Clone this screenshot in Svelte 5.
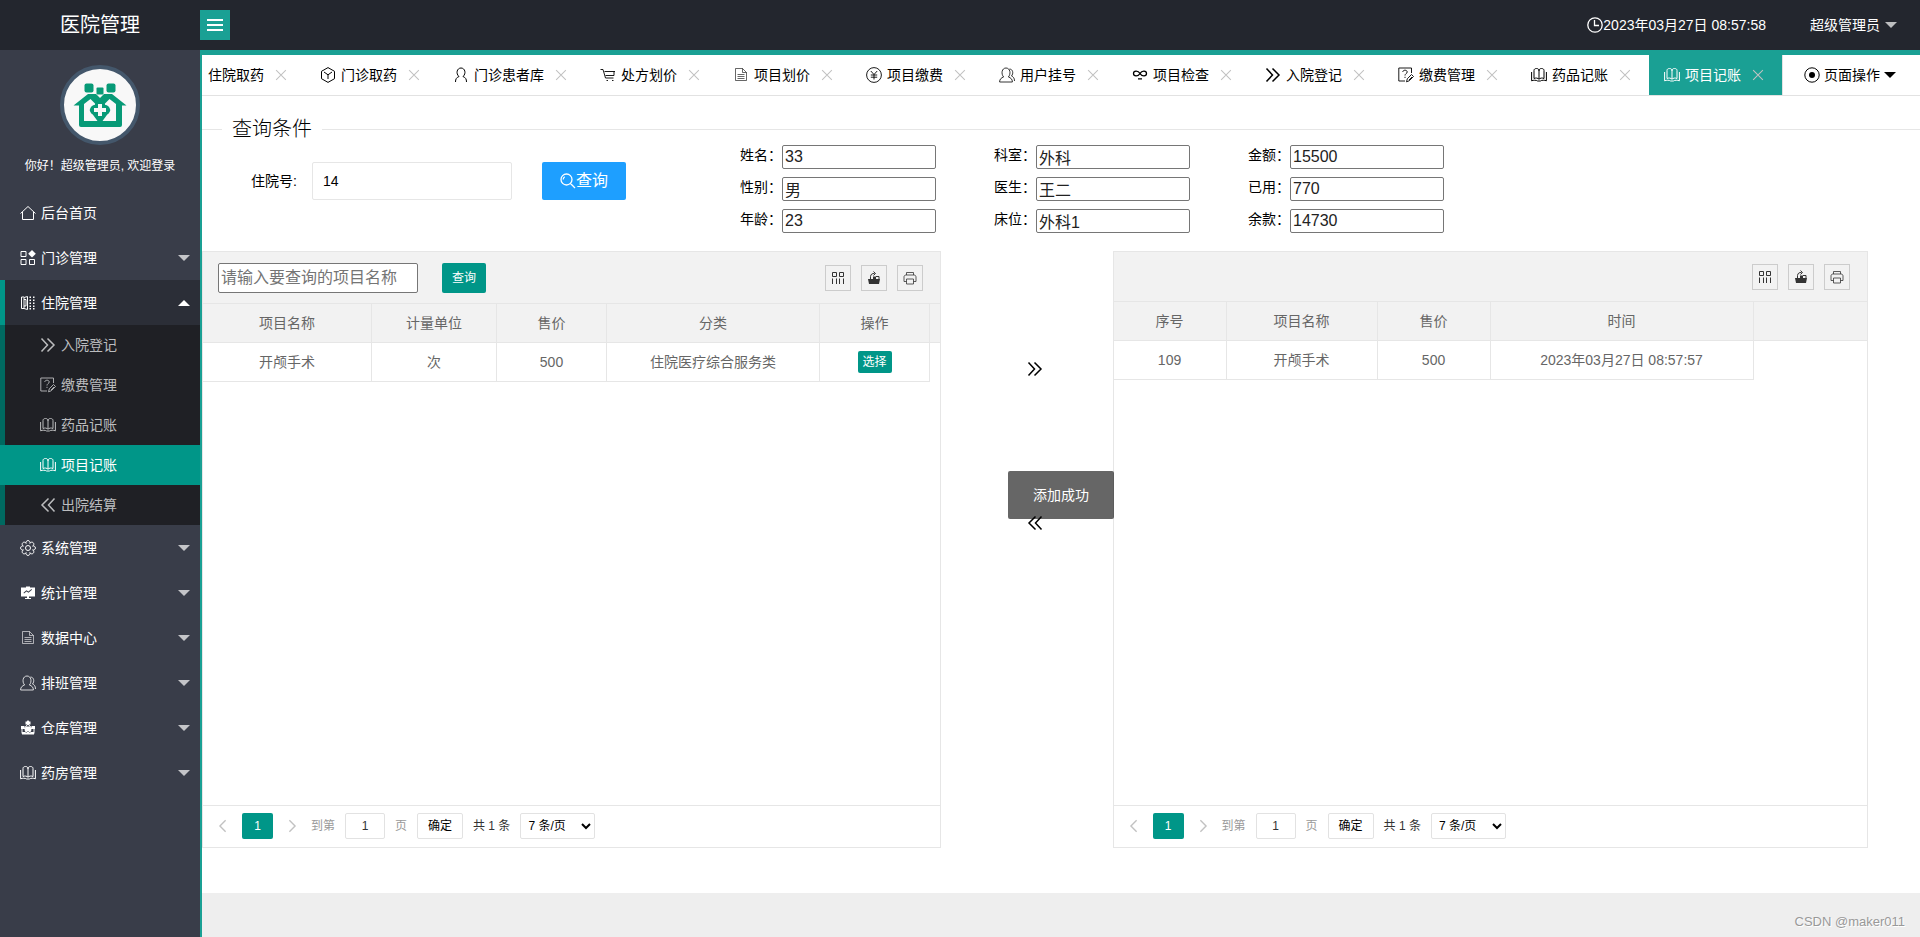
<script lang="ts">
	type Glyph = { line?: string; solid?: string; weight?: number };

	const glyphs: Record<string, Glyph> = {
		menu: { solid: 'M0 2h16v2H0zM0 7h16v2H0zM0 12h16v2H0z' },
		home: { line: 'M.5 8.5L8 1.5l7.5 7M2.5 7v7.5h11V7' },
		blocks: {
			line: 'M1 1.5h5v5H1zM1 9.5h5v5H1zM9.5 9.5h5v5h-5z',
			solid: 'M12 0l3.8 3.8L12 7.6 8.2 3.8z'
		},
		ward: {
			line: 'M4 2H1.5v11.5H4M4 4.5h2v6.5H4M7.5 1.5v13L4 13.5V2.5z',
			solid:
				'M9.5 1.5H11V3H9.5zM9.5 4.5H11V6H9.5zM9.5 7.5H11V9H9.5zM9.5 10.5H11V12H9.5zM9.5 13H11v1.5H9.5zM13 1.5h1.5V3H13zM13 4.5h1.5V6H13zM13 7.5h1.5V9H13zM13 10.5h1.5V12H13zM13 13h1.5v1.5H13z'
		},
		next: { line: 'M1.5 1.5L7.5 8l-6 6.5M7.5 1.5L14 8l-6.5 6.5', weight: 1.5 },
		prev: { line: 'M14.5 1.5L8.5 8l6 6.5M8.500 1.5L2 8l6.5 6.5', weight: 1.5 },
		survey: {
			line: 'M13.5 6V1H.8v13H7M4.8 5c0-2.400 4.400-2.400 4.400 0 0 1.600-2.200 1.600-2.200 3.500M7 9.800V11M8.500 14.800l.8-3 4.200-4.300 2 2-4.300 4.300zM11 13l3-3',
			weight: 0.9
		},
		book: {
			line: 'M8 4C8 2.200 7 1.500 5.500 1.500S3 2.200 3 3.500V11.500c1.500-.8 4-.6 5 .8 1-1.400 3.500-1.600 5-.8V3.500c0-1.300-1-2-2.500-2S8 2.200 8 4zv8M.6 5v8.800c2-.8 4.500-.8 6 .2h2.800c1.500-1 4-1 6-.2V5'
		},
		gear: {
			line: 'M12.600 9.900A2.050 2.050 0 1 1 9.900 12.600 2.050 2.050 0 1 1 6.100 12.600 2.050 2.050 0 1 1 3.400 9.900 2.050 2.050 0 1 1 3.400 6.100 2.050 2.050 0 1 1 6.100 3.400 2.050 2.050 0 1 1 9.900 3.400 2.050 2.050 0 1 1 12.600 6.100 2.050 2.050 0 1 1 12.600 9.900zM10.500 8a2.500 2.500 0 1 1-5 0 2.500 2.500 0 0 1 5 0z'
		},
		board: {
			solid:
				'M1 2.500h5V1.500h4v1H15v9H9v1.500h2v1H5v-1h2v-1.500H1zM4 8.500l2.500-2 2 1.200 3.500-3-.5-.6L8.400 6.500l-2-1.200L3.500 7.800z'
		},
		file: { line: 'M2.500 1.500h7l4 4v8h-11zM9.500 1.500v4h4M4.500 7.500h7M4.500 9.500h7M4.500 11.500h7', weight: 0.6 },
		group: {
			line: 'M.6 15c0-3 1.800-4.200 4-5C1.800 6.800 2.800 1 7 1s5.200 5.800 2.400 9c2.200.8 4 2 4 5zM10.500 2c3.500.2 4.200 4.500 2 7 1.800.8 3 2 3 5',
			weight: 0.8
		},
		depot: {
			line: 'M2 13.500V8.500h12v5zM4 8.500L8 4l4 4.500',
			solid:
				'M8 0l1.200 1.500h1.300v3H5.500v-3h1.300zM1 6h3.500v3H1zM11.500 6H15v3h-3.500zM5.500 6.500h5l1 3.500-1.500 3-2-2-2 2-1.500-3zM2 12h12v2.500H2z'
		},
		cube: { line: 'M8 .6l6.500 3.700v7.400L8 15.400l-6.500-3.700V4.300zM4 5l4 2.800L12 5M8 7.800V12' },
		user: { line: 'M2.500 15c0-3 1-4.500 3.500-5.500C2.500 6.500 4 1 8 1s5.500 5.500 2 8.500c2.500 1 3.500 2.500 3.500 5.500' },
		cart: {
			line: 'M.5 2.500H3l2.500 8.500h8M4.500 4.500h10.500M14 4.500v4H5.500M6.500 13.500h1.500M12 13.500h1.500',
			weight: 0.9
		},
		yen: {
			line: 'M15.400 8A7.400 7.400 0 1 1 .6 8a7.400 7.400 0 0 1 14.800 0zM4.800 4L8 7.500 11.200 4M8 7.500V12.500M4.800 8h6.400M4.800 10.200h6.400',
			weight: 0.9
		},
		loop: {
			line: 'M8 6.500C6 3 1.500 3.500 1.500 6.500S6 10 8 6.500s6.500-3 6.500 0S10 10 8 6.500M6 11.800h4',
			weight: 1.3
		},
		clock: { line: 'M15.2 8A7.2 7.2 0 1 1 .8 8a7.2 7.2 0 0 1 14.4 0zM7.5 3v5.5H12', weight: 1.3 },
		target: {
			line: 'M15.2 8A7.2 7.2 0 1 1 .8 8a7.2 7.2 0 0 1 14.4 0z',
			solid: 'M11 8a3 3 0 1 1-6 0 3 3 0 0 1 6 0z'
		},
		search: {
			line: 'M12 6.500A5.500 5.500 0 1 1 1 6.500a5.500 5.500 0 0 1 11 0zM3.200 6.500a3.200 3.200 0 0 1 1.500-2.700M10.500 10.500l4.500 4.500',
			weight: 1.3
		},
		close: { line: 'M1.5 1.5l13 13M14.5 1.5l-13 13', weight: 1.4 },
		left: { line: 'M11 1.5L4.500 8l6.500 6.5', weight: 1.6 },
		right: { line: 'M5 1.5L11.500 8 5 14.500', weight: 1.6 },
		columns: { line: 'M2.500 2.500h4v4h-4zM9.500 2.500h4v4h-4zM2.500 8.500V14M6.500 8.500V14M9.500 8.500V14M13.500 8.500V14' },
		export: {
			line: 'M4.500 9V6.500M10 6.500h3V9M4.500 6.500C5 4 6 3.500 8.500 3.500M7.500 1.500l2 2-2 2',
			solid: 'M2 9h12l-1 5H3zM7 6.500h3V9H7z'
		},
		print: {
			line: 'M4.500 5V2.500h7V5M4.500 11.500H2V7c0-1.200.8-2 2-2h8c1.200 0 2 .8 2 2v4.500h-2.500M4.500 9h7v5h-7z',
			weight: 0.8
		}
	};

	const stayItems = [
		{ icon: 'next', label: '入院登记' },
		{ icon: 'survey', label: '缴费管理' },
		{ icon: 'book', label: '药品记账' },
		{ icon: 'book', label: '项目记账' },
		{ icon: 'prev', label: '出院结算' }
	];

	const menu = [
		{ icon: 'home', label: '后台首页', leaf: true },
		{ icon: 'blocks', label: '门诊管理' },
		{ icon: 'ward', label: '住院管理', children: stayItems },
		{ icon: 'gear', label: '系统管理' },
		{ icon: 'board', label: '统计管理' },
		{ icon: 'file', label: '数据中心' },
		{ icon: 'group', label: '排班管理' },
		{ icon: 'depot', label: '仓库管理' },
		{ icon: 'book', label: '药房管理' }
	];

	const tabs = [
		{ icon: 'file', label: '住院取药' },
		{ icon: 'cube', label: '门诊取药' },
		{ icon: 'user', label: '门诊患者库' },
		{ icon: 'cart', label: '处方划价' },
		{ icon: 'file', label: '项目划价' },
		{ icon: 'yen', label: '项目缴费' },
		{ icon: 'group', label: '用户挂号' },
		{ icon: 'loop', label: '项目检查' },
		{ icon: 'next', label: '入院登记' },
		{ icon: 'survey', label: '缴费管理' },
		{ icon: 'book', label: '药品记账' },
		{ icon: 'book', label: '项目记账' }
	];

	const patient = [
		{ id: 'name', label: '姓名', value: '33' },
		{ id: 'dept', label: '科室', value: '外科' },
		{ id: 'total', label: '金额', value: '15500' },
		{ id: 'sex', label: '性别', value: '男' },
		{ id: 'doctor', label: '医生', value: '王二' },
		{ id: 'used', label: '已用', value: '770' },
		{ id: 'age', label: '年龄', value: '23' },
		{ id: 'bed', label: '床位', value: '外科1' },
		{ id: 'balance', label: '余款', value: '14730' }
	];

	const tools = [
		{ icon: 'columns', label: '筛选列' },
		{ icon: 'export', label: '导出' },
		{ icon: 'print', label: '打印' }
	];

	const projects = [{ name: '开颅手术', unit: '次', price: 500, kind: '住院医疗综合服务类' }];
	const records = [{ id: 109, name: '开颅手术', price: 500, time: '2023年03月27日 08:57:57' }];

	let current = $state('项目记账');
	let opened = $state('住院管理');
	let stayNo = $state('14');
	let keyword = $state('');
</script>

{#snippet icon(name: string, size = 16)}
	<svg class="icon" width={size} height={size} viewBox="0 0 16 16" aria-hidden="true">
		{#if glyphs[name].line}
			<path
				d={glyphs[name].line}
				fill="none"
				stroke="currentColor"
				stroke-width={glyphs[name].weight ?? 1}
			/>
		{/if}
		{#if glyphs[name].solid}
			<path d={glyphs[name].solid} fill="currentColor" fill-rule="evenodd" />
		{/if}
	</svg>
{/snippet}

{#snippet toolbar()}
	<div class="tools">
		{#each tools as tool (tool.icon)}
			<button type="button" class="tool" aria-label={tool.label}>{@render icon(tool.icon)}</button>
		{/each}
	</div>
{/snippet}

{#snippet pager(id: string)}
	<div class="pager">
		<button type="button" class="step" aria-label="上一页">{@render icon('left', 14)}</button>
		<button type="button" class="page-no">1</button>
		<button type="button" class="step" aria-label="下一页">{@render icon('right', 14)}</button>
		<label class="jump">到第 <input id="{id}-page" value="1" /> 页</label>
		<button type="button" class="confirm">确定</button>
		<span>共 1 条</span>
		<select aria-label="每页条数">
			<option>7 条/页</option>
			<option>14 条/页</option>
			<option>21 条/页</option>
		</select>
	</div>
{/snippet}

<div class="admin">
	<header class="header">
		<h1>医院管理</h1>
		<button type="button" class="toggle" aria-label="展开菜单">{@render icon('menu')}</button>
		<div class="clock">{@render icon('clock')}<time>2023年03月27日 08:57:58</time></div>
		<button type="button" class="account">超级管理员<i class="caret"></i></button>
	</header>

	<div class="body">
		<aside class="side">
			<svg class="avatar" viewBox="0 0 80 80" role="img" aria-label="头像">
				<circle cx="40" cy="40" r="38" fill="#f8f8f8" stroke="#44576b" stroke-width="4" />
				<g fill="#079a77">
					<rect x="24.5" y="18.5" width="9" height="9" rx="2" />
					<rect x="36.5" y="22.5" width="7" height="7" rx="1" />
					<rect x="46.5" y="18.5" width="9" height="9" rx="2" />
					<path d="M13.5 40.5L28 29h8l4 4 4-4h8l14.5 11.5H62V60q0 2-2 2H21q-2 0-2-2V40.5z" />
				</g>
				<path d="M24 56V39l6.5-5 5 5-6 6 8 11zM56 56V39l-6.5-5-5 5 6 6-8 11z" fill="#f8f8f8" />
				<g fill="#079a77">
					<circle cx="40" cy="40" r="5" />
					<circle cx="40" cy="50" r="5" />
					<circle cx="35" cy="45" r="5" />
					<circle cx="45" cy="45" r="5" />
				</g>
				<path d="M38 39h4v4h4v4h-4v4h-4v-4h-4v-4h4z" fill="#f8f8f8" />
			</svg>
			<p class="hello">你好！超级管理员, 欢迎登录</p>

			<nav>
				{#each menu as item (item.label)}
					<button
						type="button"
						class="nav-item"
						class:open={opened === item.label}
						onclick={() => (opened = opened === item.label ? '' : item.label)}
					>
						{@render icon(item.icon)}
						<span>{item.label}</span>
						{#if !item.leaf}<i class="caret"></i>{/if}
					</button>
					{#if item.children && opened === item.label}
						<div class="nav-child">
							{#each item.children as child (child.label)}
								<a
									href="#{child.label}"
									class:active={current === child.label}
									onclick={() => (current = child.label)}
								>
									{@render icon(child.icon)}
									<span>{child.label}</span>
								</a>
							{/each}
						</div>
					{/if}
				{/each}
			</nav>
		</aside>

		<main class="main">
			<div class="tab-bar">
				<div class="tab-list">
					{#each tabs as tab (tab.label)}
						<div class="tab" class:active={current === tab.label}>
							<button type="button" class="tab-name" onclick={() => (current = tab.label)}>
								{@render icon(tab.icon)}{tab.label}
							</button>
							<button type="button" class="tab-close" aria-label="关闭{tab.label}">
								{@render icon('close', 12)}
							</button>
						</div>
					{/each}
				</div>
				<button type="button" class="page-ops">{@render icon('target')}页面操作<i class="caret"></i></button>
			</div>

			<div class="content">
				<fieldset>
					<legend>查询条件</legend>
					<div class="query">
						<form class="query-form" onsubmit={(e) => e.preventDefault()}>
							<label for="stay-no">住院号:</label>
							<input id="stay-no" bind:value={stayNo} />
							<button type="submit">{@render icon('search')}查询</button>
						</form>
						<div class="patient">
							{#each patient as field (field.id)}
								<div class="field">
									<label for={field.id}>{field.label}：</label>
									<input id={field.id} value={field.value} readonly />
								</div>
							{/each}
						</div>
					</div>
				</fieldset>

				<div class="work">
					<section class="panel">
						<div class="panel-head search-head">
							<input
								class="keyword"
								aria-label="项目名称"
								placeholder="请输入要查询的项目名称"
								bind:value={keyword}
							/>
							<button type="button" class="small-search">查询</button>
							{@render toolbar()}
						</div>
						<div class="panel-body">
							<table>
								<colgroup>
									<col class="w-169" /><col class="w-125" /><col class="w-110" /><col class="w-213" />
									<col class="w-110" /><col />
								</colgroup>
								<thead>
									<tr><th>项目名称</th><th>计量单位</th><th>售价</th><th>分类</th><th>操作</th><th class="rest"></th></tr>
								</thead>
								<tbody>
									{#each projects as row (row.name)}
										<tr>
											<td>{row.name}</td>
											<td>{row.unit}</td>
											<td>{row.price}</td>
											<td>{row.kind}</td>
											<td><button type="button" class="pick">选择</button></td>
											<td class="rest"></td>
										</tr>
									{/each}
								</tbody>
							</table>
						</div>
						{@render pager('project')}
					</section>

					<div class="transfer">
						<button type="button" aria-label="添加">{@render icon('next')}</button>
						<button type="button" aria-label="移除">{@render icon('prev')}</button>
					</div>

					<section class="panel">
						<div class="panel-head">
							{@render toolbar()}
						</div>
						<div class="panel-body">
							<table>
								<colgroup>
									<col class="w-113" /><col class="w-151" /><col class="w-113" /><col class="w-263" /><col />
								</colgroup>
								<thead>
									<tr><th>序号</th><th>项目名称</th><th>售价</th><th>时间</th><th class="rest"></th></tr>
								</thead>
								<tbody>
									{#each records as row (row.id)}
										<tr>
											<td>{row.id}</td>
											<td>{row.name}</td>
											<td>{row.price}</td>
											<td>{row.time}</td>
											<td class="rest"></td>
										</tr>
									{/each}
								</tbody>
							</table>
						</div>
						{@render pager('record')}
					</section>
				</div>

				<div class="toast" role="status">添加成功</div>
			</div>

			<footer class="footer">CSDN @maker011</footer>
		</main>
	</div>
</div>

<style>
	:global(body) {
		background: #fff;
	}

	.admin {
		display: flex;
		flex-direction: column;
		min-height: 100vh;
		color: #000;
		font-family: 'Liberation Sans', 'Noto Sans CJK SC', sans-serif;
		font-size: 14px;
		line-height: 20px;
	}

	.admin *,
	.admin {
		box-sizing: border-box;
	}

	button,
	input,
	select {
		margin: 0;
		font: inherit;
	}

	button {
		padding: 0;
		border: 0;
		background: none;
		color: inherit;
		white-space: nowrap;
		cursor: pointer;
	}

	.icon {
		display: block;
		flex: none;
	}

	.caret {
		border: 6px solid transparent;
		border-top-color: currentColor;
		border-bottom-width: 0;
	}

	.header {
		display: flex;
		align-items: center;
		height: 50px;
		padding-right: 23px;
		background: #23262e;
		color: #fff;
	}

	h1 {
		width: 200px;
		margin: 0;
		font-size: 20px;
		font-weight: 400;
		text-align: center;
	}

	.toggle {
		display: flex;
		align-items: center;
		justify-content: center;
		width: 30px;
		height: 30px;
		background: #1aa094;
	}

	.clock {
		display: flex;
		align-items: center;
		margin-left: auto;
	}

	.account {
		display: flex;
		align-items: center;
		gap: 5px;
		margin-left: 44px;
	}

	.account .caret,
	.nav-item .caret {
		border-top-color: rgb(255 255 255 / 70%);
	}

	.body {
		display: flex;
		flex: 1;
	}

	.side {
		flex: 0 0 200px;
		background: #393d49;
		color: #fff;
	}

	.avatar {
		display: block;
		width: 80px;
		height: 80px;
		margin: 15px auto 0;
	}

	.hello {
		margin: 11px 0 14px;
		font-size: 12px;
		text-align: center;
	}

	.nav-item {
		display: flex;
		align-items: center;
		gap: 5px;
		width: 100%;
		height: 45px;
		padding: 0 10px 0 20px;
	}

	.nav-item .caret {
		margin-left: auto;
	}

	.nav-item.open {
		padding-left: 15px;
		border-left: 5px solid #009688;
		background: #2b2e37;
	}

	.nav-item.open .caret {
		border-width: 0 6px 6px;
		border-bottom-color: #fff;
	}

	.nav-child {
		background: #1f2025;
	}

	.nav-child a {
		display: flex;
		align-items: center;
		gap: 5px;
		height: 40px;
		padding-left: 35px;
		border-left: 5px solid #006960;
		color: #bbbcbe;
		text-decoration: none;
	}

	.nav-child a.active {
		border-color: #009688;
		background: #009688;
		color: #fff;
	}

	.main {
		display: flex;
		flex: 1;
		flex-direction: column;
		min-width: 0;
		border-top: 5px solid #1aa094;
		border-left: 2px solid #1aa094;
	}

	.tab-bar {
		display: flex;
		height: 41px;
		border-bottom: 1px solid #e2e2e2;
	}

	/* the newest tab stays in view, older ones slide out on the left */
	.tab-list {
		display: flex;
		flex: 1;
		justify-content: flex-end;
		min-width: 0;
		overflow: hidden;
	}

	.tab {
		display: flex;
		flex: none;
		align-items: center;
		gap: 8px;
		padding: 0 15px;
	}

	.tab.active {
		background: #1aa094;
		color: #fff;
	}

	.tab-name {
		display: flex;
		align-items: center;
		gap: 5px;
	}

	.tab-close {
		display: flex;
		align-items: center;
		justify-content: center;
		width: 18px;
		height: 18px;
		color: #c2c2c2;
	}

	.page-ops {
		display: flex;
		align-items: center;
		gap: 4px;
		padding: 0 24px 0 21px;
		border-left: 1px solid #e2e2e2;
	}

	.content {
		position: relative;
		display: flex;
		flex: 1;
		flex-direction: column;
		padding: 18px 0 45px;
	}

	fieldset {
		min-width: 0;
		margin: 0;
		padding: 0;
		border: 0;
		border-top: 1px solid #e6e6e6;
	}

	legend {
		margin-left: 20px;
		padding: 0 10px;
		font-size: 20px;
		font-weight: 300;
		line-height: 30px;
	}

	.query {
		display: flex;
		align-items: flex-start;
		padding: 1px 0 18px 49px;
	}

	.query-form {
		display: flex;
		align-items: center;
		padding-top: 17px;
	}

	.query-form label {
		width: 61px;
	}

	.query-form input {
		width: 200px;
		height: 38px;
		padding: 0 10px;
		border: 1px solid #e6e6e6;
		border-radius: 2px;
	}

	.query-form button {
		display: flex;
		align-items: center;
		justify-content: center;
		width: 84px;
		height: 38px;
		margin-left: 30px;
		border-radius: 2px;
		background: #1e9fff;
		color: #fff;
		font-size: 16px;
	}

	.patient {
		display: grid;
		grid-template-columns: repeat(3, 196px);
		gap: 8px 58px;
		margin-left: 114px;
	}

	.field {
		display: flex;
	}

	.field label {
		flex: 0 0 42px;
	}

	.field input {
		width: 154px;
		height: 24px;
		padding: 1px 2px;
		border: 1px solid #767676;
		border-radius: 2px;
		color: #222;
		font-size: 16px;
	}

	.work {
		display: grid;
		flex: 1;
		grid-template-columns: 43fr 10fr 44fr 3fr;
	}

	.panel {
		display: flex;
		flex-direction: column;
		min-width: 0;
		border: 1px solid #e6e6e6;
		color: #666;
	}

	.panel-head {
		display: flex;
		align-items: center;
		height: 50px;
		padding: 0 17px 0 15px;
		border-bottom: 1px solid #e6e6e6;
		background: #f2f2f2;
	}

	.search-head {
		height: 52px;
	}

	.keyword {
		width: 200px;
		height: 30px;
		padding: 1px 2px;
		border: 1px solid #767676;
		border-radius: 2px;
		font-size: 16px;
	}

	.keyword::placeholder {
		color: #757575;
	}

	.small-search {
		width: 44px;
		height: 30px;
		margin-left: 24px;
		border-radius: 2px;
		background: #009688;
		color: #fff;
		font-size: 12px;
	}

	.tools {
		display: flex;
		gap: 10px;
		margin-left: auto;
	}

	.tool {
		display: flex;
		align-items: center;
		justify-content: center;
		width: 26px;
		height: 26px;
		border: 1px solid #ccc;
		color: #333;
	}

	.panel-body {
		flex: 1;
	}

	table {
		width: 100%;
		border-collapse: separate;
		border-spacing: 0;
		table-layout: fixed;
	}

	.w-110 {
		width: 110px;
	}

	.w-113 {
		width: 113px;
	}

	.w-125 {
		width: 125px;
	}

	.w-151 {
		width: 151px;
	}

	.w-169 {
		width: 169px;
	}

	.w-213 {
		width: 213px;
	}

	.w-263 {
		width: 263px;
	}

	th,
	td {
		height: 39px;
		padding: 0;
		border-right: 1px solid #e6e6e6;
		border-bottom: 1px solid #e6e6e6;
		font-weight: 400;
		text-align: center;
	}

	th {
		background: #f2f2f2;
	}

	.rest {
		border-right: 0;
	}

	td.rest {
		border-bottom: 0;
	}

	.pick {
		width: 34px;
		height: 22px;
		border-radius: 2px;
		background: #009688;
		color: #fff;
		font-size: 12px;
		vertical-align: middle;
	}

	.pager {
		display: flex;
		align-items: center;
		gap: 10px;
		height: 42px;
		padding: 0 11px 2px;
		border-top: 1px solid #e6e6e6;
		color: #333;
		font-size: 12px;
		white-space: nowrap;
	}

	.step {
		display: flex;
		align-items: center;
		justify-content: center;
		width: 18px;
		height: 26px;
		color: #c2c2c2;
	}

	.page-no {
		width: 31px;
		height: 26px;
		border-radius: 2px;
		background: #009688;
		color: #fff;
	}

	.jump {
		display: flex;
		align-items: center;
		gap: 10px;
		color: #999;
	}

	.jump input {
		width: 40px;
		height: 26px;
		padding: 0;
		border: 1px solid #e2e2e2;
		border-radius: 2px;
		color: #333;
		text-align: center;
	}

	.confirm {
		width: 46px;
		height: 26px;
		border: 1px solid #e2e2e2;
		border-radius: 2px;
		color: #000;
	}

	.pager select {
		width: 75px;
		height: 26px;
		padding: 0 3px;
		border: 1px solid #e2e2e2;
		border-radius: 2px;
		background: #fff;
		color: #000;
	}

	.transfer {
		display: flex;
		flex-direction: column;
		gap: 138px;
		align-items: flex-start;
		padding: 110px 0 0 50%;
	}

	.toast {
		position: absolute;
		top: 50%;
		left: 50%;
		padding: 14px 25px;
		border-radius: 2px;
		background: rgb(0 0 0 / 60%);
		color: #fff;
		transform: translate(-50%, -50%);
	}

	.footer {
		display: flex;
		align-items: flex-end;
		justify-content: flex-end;
		height: 44px;
		padding: 0 15px 5px 0;
		background: #eee;
		color: #999;
		font-size: 13px;
		text-shadow: 1px 1px 0 #fff;
	}
</style>
